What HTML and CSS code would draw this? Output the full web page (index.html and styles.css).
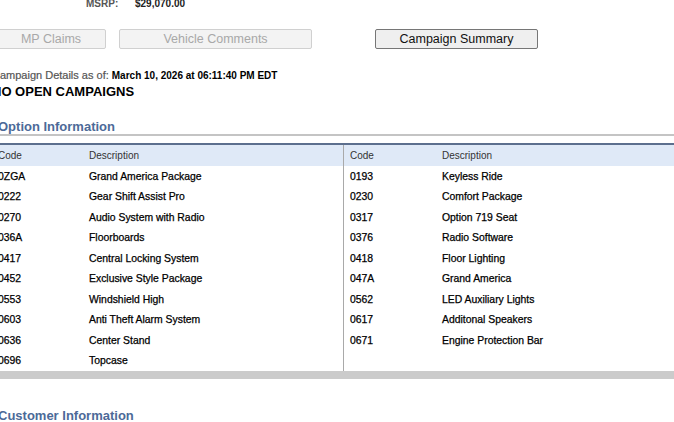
FILE: index.html
```html
<!DOCTYPE html>
<html>
<head>
<meta charset="utf-8">
<link rel="stylesheet" href="styles.css">
</head>
<body>
<div class="page">
  <div class="msrp-row">
    <span class="msrp-label">MSRP:</span>
    <span class="msrp-value">$29,070.00</span>
  </div>
  <div class="button-row">
    <button class="btn btn-mp" disabled>MP Claims</button>
    <button class="btn btn-vc" disabled>Vehicle Comments</button>
    <button class="btn btn-cs">Campaign Summary</button>
  </div>
  <div class="campaign-details">
    <span class="cd-label">Campaign Details as of:</span>
    <span class="cd-value">March 10, 2026 at 06:11:40 PM EDT</span>
  </div>
  <div class="no-campaigns">NO OPEN CAMPAIGNS</div>

  <h2 class="section-title">Option Information</h2>
  <div class="options">
    <div class="opt-col opt-left">
      <div class="opt-row opt-head"><span>Code</span><span>Description</span></div>
      <div class="opt-row"><span>0ZGA</span><span>Grand America Package</span></div>
      <div class="opt-row"><span>0222</span><span>Gear Shift Assist Pro</span></div>
      <div class="opt-row"><span>0270</span><span>Audio System with Radio</span></div>
      <div class="opt-row"><span>036A</span><span>Floorboards</span></div>
      <div class="opt-row"><span>0417</span><span>Central Locking System</span></div>
      <div class="opt-row"><span>0452</span><span>Exclusive Style Package</span></div>
      <div class="opt-row"><span>0553</span><span>Windshield High</span></div>
      <div class="opt-row"><span>0603</span><span>Anti Theft Alarm System</span></div>
      <div class="opt-row"><span>0636</span><span>Center Stand</span></div>
      <div class="opt-row"><span>0696</span><span>Topcase</span></div>
    </div>
    <div class="opt-col opt-right">
      <div class="opt-row opt-head"><span>Code</span><span>Description</span></div>
      <div class="opt-row"><span>0193</span><span>Keyless Ride</span></div>
      <div class="opt-row"><span>0230</span><span>Comfort Package</span></div>
      <div class="opt-row"><span>0317</span><span>Option 719 Seat</span></div>
      <div class="opt-row"><span>0376</span><span>Radio Software</span></div>
      <div class="opt-row"><span>0418</span><span>Floor Lighting</span></div>
      <div class="opt-row"><span>047A</span><span>Grand America</span></div>
      <div class="opt-row"><span>0562</span><span>LED Auxiliary Lights</span></div>
      <div class="opt-row"><span>0617</span><span>Additonal Speakers</span></div>
      <div class="opt-row"><span>0671</span><span>Engine Protection Bar</span></div>
    </div>
  </div>
  <div class="options-footer"></div>

  <h2 class="section-title section-customer">Customer Information</h2>
</div>
</body>
</html>
```

FILE: styles.css
```css
html, body {
  margin: 0;
  padding: 0;
  background: #ffffff;
  overflow: hidden;
}
body {
  font-family: "Liberation Sans", Arial, sans-serif;
  color: #111;
}
.page {
  margin-left: -8px;
  width: 740px;
}
.msrp-row {
  margin-top: -4px;
  height: 16px;
  line-height: 16px;
  font-size: 10px;
  font-weight: bold;
  padding-left: 94px;
  display: flex;
}
.msrp-label {
  color: #555;
  width: 49px;
}
.msrp-value {
  color: #222;
}
.button-row {
  display: flex;
  margin-top: 17px;
  padding-left: 4px;
  height: 20px;
}
.btn {
  font-family: "Liberation Sans", Arial, sans-serif;
  font-size: 12.5px;
  height: 20px;
  padding: 0;
  box-sizing: border-box;
  border-radius: 2px;
  background: #efefef;
  color: #111;
  border: 1px solid #767676;
}
.btn:disabled {
  color: #a8a8a8;
  border-color: #d0d0d0;
  background: #f3f3f3;
}
.btn-mp { width: 110px; }
.btn-vc { width: 193px; margin-left: 13px; }
.btn-cs { width: 163px; margin-left: 63px; }
.campaign-details {
  margin-top: 19px;
  height: 14px;
  line-height: 14px;
  display: flex;
  align-items: baseline;
  gap: 3px;
}
.cd-label {
  color: #555;
  font-size: 11px;
  -webkit-text-stroke: 0.2px #555;
}
.cd-value {
  color: #000;
  font-size: 10px;
  font-weight: bold;
}
.no-campaigns {
  margin-top: 2px;
  font-size: 13px;
  font-weight: bold;
  line-height: 16px;
  color: #000;
}
.section-title {
  margin: 0;
  margin-top: 20px;
  font-size: 13px;
  font-weight: bold;
  line-height: 14px;
  color: #4c6a98;
  padding-left: 6px;
  padding-bottom: 0;
  border-bottom: 2px solid #c4c4c4;
}
.options {
  margin-top: 7px;
  display: flex;
  border-top: 2px solid #5c6f8e;
  font-size: 10.4px;
}
.opt-col {
  width: 351px;
  flex: none;
}
.opt-left {
  border-right: 1px solid #a9a9a9;
}
.opt-row {
  display: grid;
  grid-template-columns: 91px 1fr;
  height: 20.5px;
  align-items: center;
  padding-left: 6px;
  color: #000;
  -webkit-text-stroke: 0.25px #000;
}
.opt-row.opt-head {
  height: 21px;
  background: #dfe9f7;
  font-size: 10px;
  color: #333;
  -webkit-text-stroke: 0;
}
.opt-right .opt-row {
  grid-template-columns: 92px 1fr;
}
.options-footer {
  height: 8px;
  background: #cbcbcb;
}
.section-customer {
  margin-top: 30px;
  border-bottom: none;
}
```
